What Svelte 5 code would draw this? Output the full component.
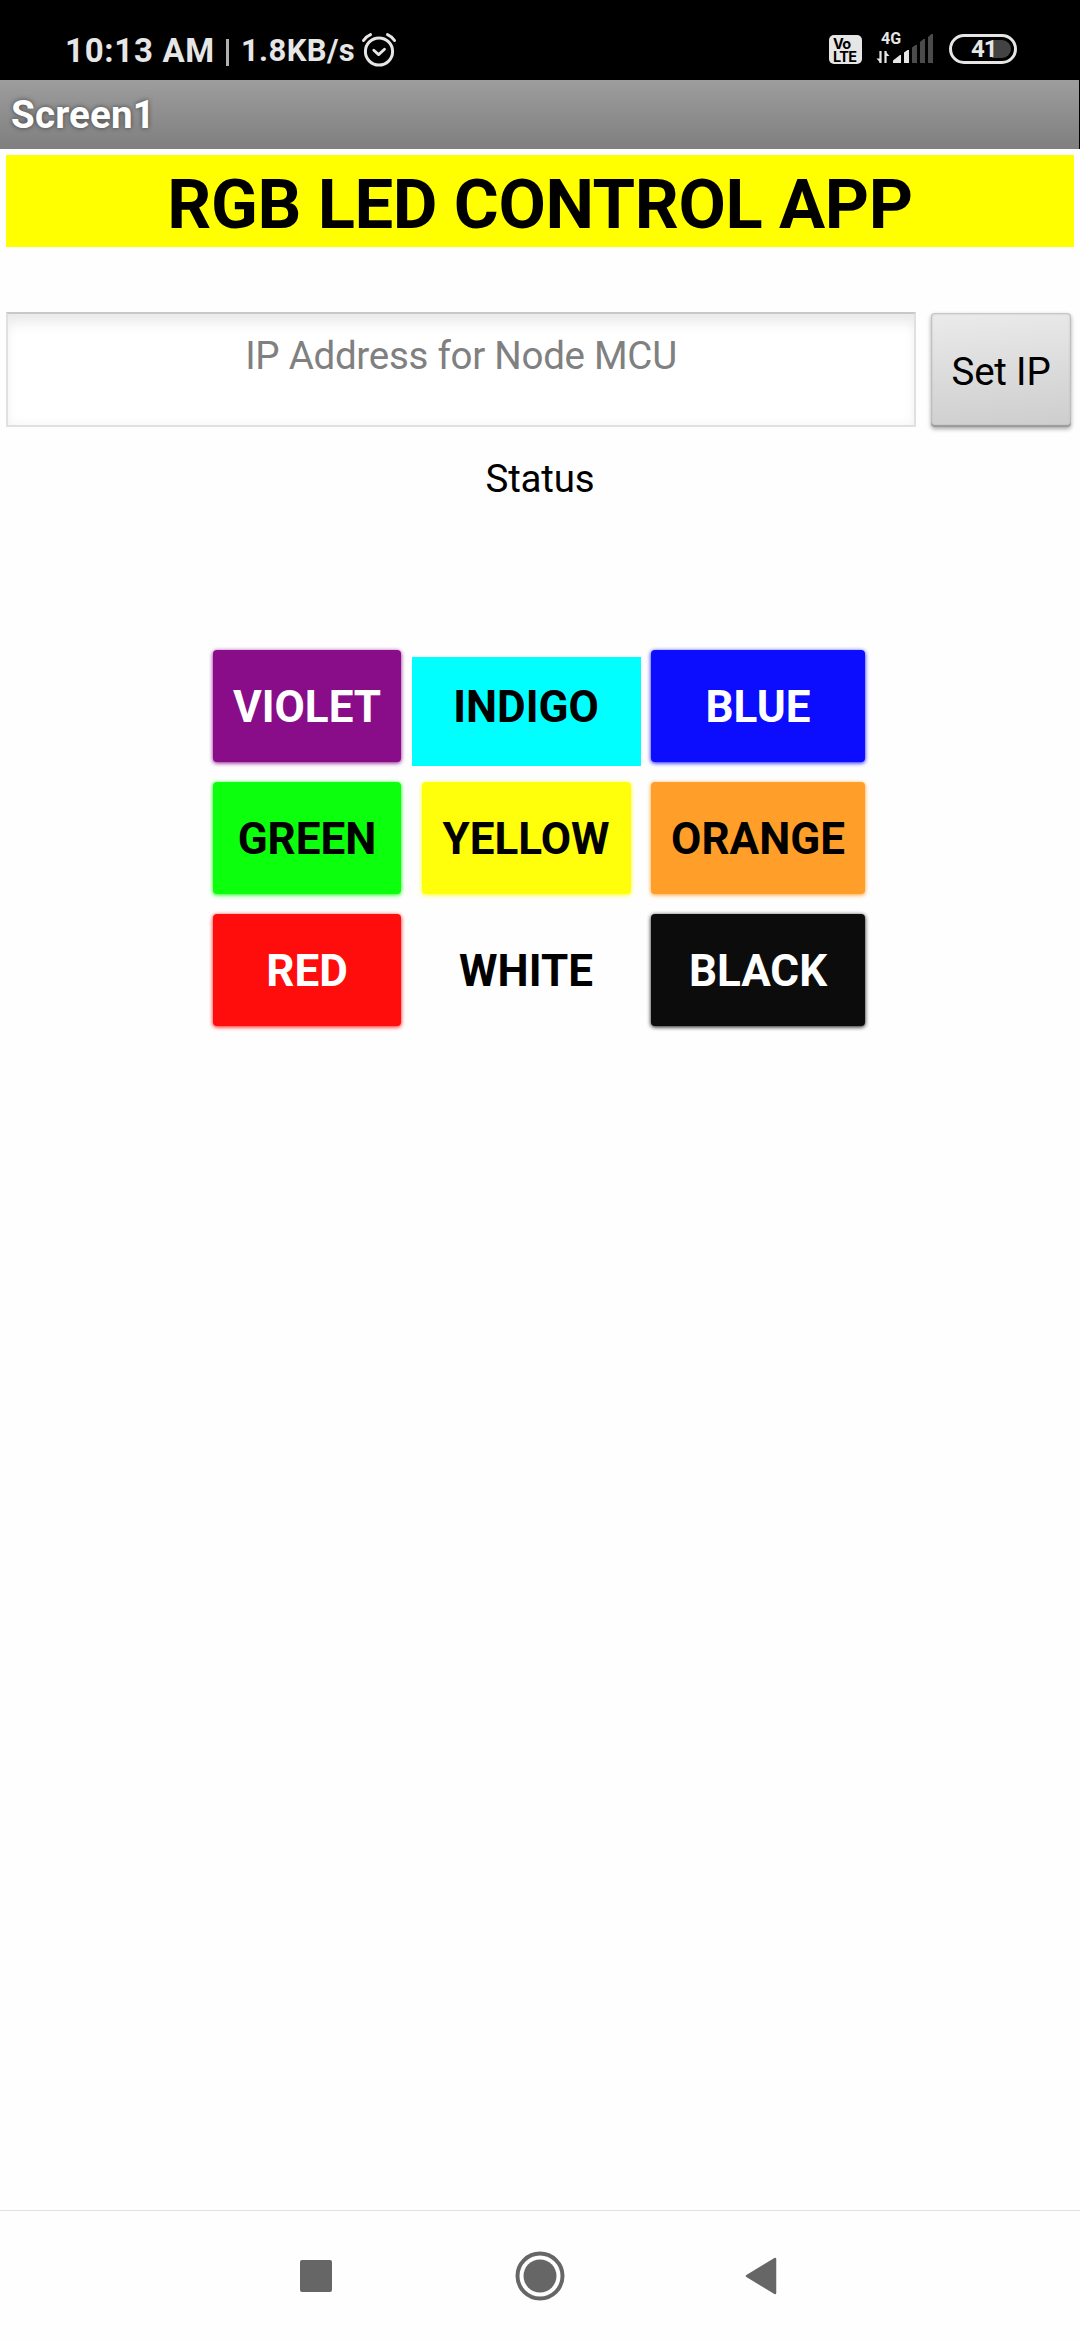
<script>
  const colors = [
    { name: 'VIOLET', kind: 'violet' },
    { name: 'INDIGO', kind: 'indigo' },
    { name: 'BLUE', kind: 'blue' },
    { name: 'GREEN', kind: 'green' },
    { name: 'YELLOW', kind: 'yellow' },
    { name: 'ORANGE', kind: 'orange' },
    { name: 'RED', kind: 'red' },
    { name: 'WHITE', kind: 'white' },
    { name: 'BLACK', kind: 'black' }
  ];
</script>

<div class="phone">
  <header class="status-bar">
    <div class="left">
      <span class="time">10:13 AM</span>
      <span class="divider"></span>
      <span class="speed">1.8KB/s</span>
      <svg class="alarm" width="36" height="36" viewBox="0 0 36 36" fill="none" stroke="#e6e6e6" stroke-linecap="round">
        <circle cx="18" cy="19.5" r="13.6" stroke-width="3" />
        <path d="M2.5 8.5 Q5 4.500 9.500 2.600 M26.500 2.600 Q31 4.500 33.500 8.500" stroke-width="3" />
        <path d="M12.800 18.300 L17.600 22.600 L23.500 17.300" stroke-width="2.800" stroke-linejoin="round" />
      </svg>
    </div>
    <div class="right">
      <div class="volte"><span>Vo</span><span>LTE</span></div>
      <div class="signal">
        <span class="net">4G</span>
        <svg width="58" height="30" viewBox="0 0 58 30">
          <path d="M4.500 29 V17 M9.500 17 V29" stroke="#e6e6e6" stroke-width="2.200" />
          <path d="M4.500 29 L0.500 24.500 H4.500 Z M9.500 17.500 L13.500 22 H9.500 Z" fill="#e6e6e6" />
          <path d="M17 29 V26.500 L24 21 H25 V29 Z M28 29 V18.500 L31.500 16 H33 V29 Z" fill="#e6e6e6" />
          <path d="M36 29 V13.500 L39.500 11 H41 V29 Z M44 29 V8 L47.500 5 H49 V29 Z M52 29 V3 L55.500 0 H57 V29 Z" fill="#4b4b4b" />
        </svg>
      </div>
      <div class="battery"><span>41</span></div>
    </div>
  </header>

  <div class="title-bar">Screen1</div>

  <main>
    <h1>RGB LED CONTROL APP</h1>
    <div class="ip-row">
      <input type="text" placeholder="IP Address for Node MCU" />
      <button class="set">Set IP</button>
    </div>
    <p class="status">Status</p>
    <div class="grid">
      {#each colors as c}
        <button class="color {c.kind}">{c.name}</button>
      {/each}
    </div>
  </main>

  <nav>
    <svg width="32" height="32" viewBox="0 0 32 32"><rect width="32" height="32" rx="2" fill="#666" /></svg>
    <svg class="home" width="50" height="50" viewBox="0 0 50 50">
      <circle cx="25" cy="25" r="22.500" fill="none" stroke="#666" stroke-width="4" />
      <circle cx="25" cy="25" r="16.500" fill="#666" />
    </svg>
    <svg width="32" height="38" viewBox="0 0 32 38">
      <path d="M2 19 L30 2 V36 Z" fill="#666" stroke="#666" stroke-width="2.500" stroke-linejoin="round" />
    </svg>
  </nav>
</div>

<style>
  :global(body) { margin: 0; background: #fff; }
  .phone {
    width: 1080px; height: 2340px; display: flex; flex-direction: column;
    background: #fefefe; font-family: Roboto, "Liberation Sans", sans-serif;
    color: #000; overflow: hidden;
  }
  button, input { font-family: inherit; border: 0; margin: 0; box-sizing: border-box; }

  .status-bar {
    height: 80px; box-sizing: border-box; background: #000; color: #e6e6e6;
    display: flex; justify-content: space-between; padding: 0 63px 0 65px; flex: none;
  }
  .left, .right { height: 80px; box-sizing: border-box; }
  .left { display: flex; align-items: center; padding-top: 20px; }
  .time { font-size: 33px; font-weight: 700; white-space: nowrap; letter-spacing: 0.700px; }
  .divider { width: 3px; height: 27px; margin: 4px 12px 0 11px; background: #b0b0b0; }
  .speed { font-size: 31px; font-weight: 700; padding-top: 1px; letter-spacing: 0.400px; }
  .alarm { margin-left: 6px; }
  .right { display: flex; align-items: flex-start; padding-top: 34px; }
  .volte {
    width: 33px; height: 29px; margin-top: 1px; border-radius: 5px; background: #e6e6e6; color: #000;
    box-sizing: border-box; padding: 2px 0 0 4px; display: flex; flex-direction: column;
    font-family: Inter, Roboto, sans-serif; font-size: 14.500px; font-weight: 700; line-height: 13px;
    letter-spacing: -0.600px;
  }
  .signal { width: 58px; height: 30px; margin-left: 14px; position: relative; }
  .signal svg { display: block; }
  .net {
    position: absolute; left: 5px; top: -4px; font-size: 16px; line-height: 18px; font-weight: 700;
  }
  .battery {
    width: 68px; height: 30px; box-sizing: border-box; margin-left: 15px; border: 3px solid #e6e6e6;
    border-radius: 15px; display: flex; align-items: center; justify-content: center; padding: 3px;
  }
  .battery span {
    flex: 1; height: 18px; line-height: 19px; font-size: 24px; font-weight: 700; letter-spacing: -1px;
    text-align: left; padding-left: 16px; border-radius: 9px;
    background: linear-gradient(90deg, #000 0 37px, #434343 37px);
  }

  .title-bar {
    width: 1079px; height: 69px; box-sizing: border-box; flex: none; padding-left: 11px;
    line-height: 69px; font-size: 38.500px; font-weight: 700; color: #fff; letter-spacing: 0.200px;
    background: linear-gradient(#9d9d9d, #7f7f7f); text-shadow: 0 0 5px rgba(0, 0, 0, 0.55);
    box-shadow: 1px 0 #000;
  }

  main { flex: 1; padding: 6px 6px 0; }
  h1 {
    margin: 0; height: 92px; line-height: 99px; background: #ff0; text-align: center;
    font-size: 68.750px; font-weight: 700; white-space: nowrap; letter-spacing: -0.380px;
  }
  .ip-row { display: flex; margin-top: 65px; gap: 15px; }
  input {
    width: 910px; height: 115px; border: 2px solid #e0e0e0; border-top-color: #c8c8c8; background: #fff;
    padding: 0 0 29px; text-align: center; font-size: 38.500px; border-radius: 0; letter-spacing: -0.270px;
    box-shadow: inset 0 16px 14px -8px #e9e9e9, inset 0 0 12px #f3f3f3; outline: none;
  }
  input::placeholder { color: #808080; opacity: 1; }
  .set {
    width: 140px; height: 114px; margin-top: 1px; padding: 2px 0 0; border-radius: 4px; font-size: 38.500px;
    color: #000; letter-spacing: -0.200px;
    background: linear-gradient(175deg, #ebebeb, #cdcdcd);
    box-shadow: inset 0 -2px 1px #9a9a9a, inset 0 0 2px 1px #bcbcbc, 0 2px 4px rgba(0, 0, 0, 0.35);
  }
  .status {
    margin: 29px 0 0; height: 46px; line-height: 46px; text-align: center; font-size: 38.500px;
    letter-spacing: -0.200px;
  }
  .grid {
    display: grid; grid-template-columns: 188px 209px 214px; grid-auto-rows: 112px;
    column-gap: 20.500px; row-gap: 20px; margin: 148px 0 0 207px; width: 652px;
  }
  .color { padding: 2px 0 0; font-size: 44px; font-weight: 700; border-radius: 4px; white-space: nowrap; }
  .violet { background: #890c89; color: #fff; box-shadow: 0 1px 4px #890c89; }
  .indigo { background: #0ff; color: #000; margin: 7px -10px -4px; padding: 0 0 9px; border-radius: 0; }
  .blue { background: #0c0cff; color: #fff; box-shadow: 0 1px 4px #0c0cff; }
  .green { background: #0cff0c; color: #000; box-shadow: 0 1px 4px #0cff0c; }
  .yellow { background: #ffff0c; color: #000; box-shadow: 0 1px 4px #ffff0c; }
  .orange { background: #ff9e28; color: #000; box-shadow: 0 1px 4px #ff9e28; }
  .red { background: #ff0c0c; color: #fff; box-shadow: 0 1px 4px #ff0c0c; }
  .white { background: #fefefe; color: #000; }
  .black { background: #0c0c0c; color: #fff; box-shadow: 0 1px 4px #0c0c0c; }

  nav {
    height: 130px; box-sizing: border-box; flex: none; border-top: 1px solid #e2e2e2;
    display: flex; justify-content: space-between; align-items: center; padding: 0 303px 0 300px;
  }
  .home { margin-left: 3px; }
</style>
